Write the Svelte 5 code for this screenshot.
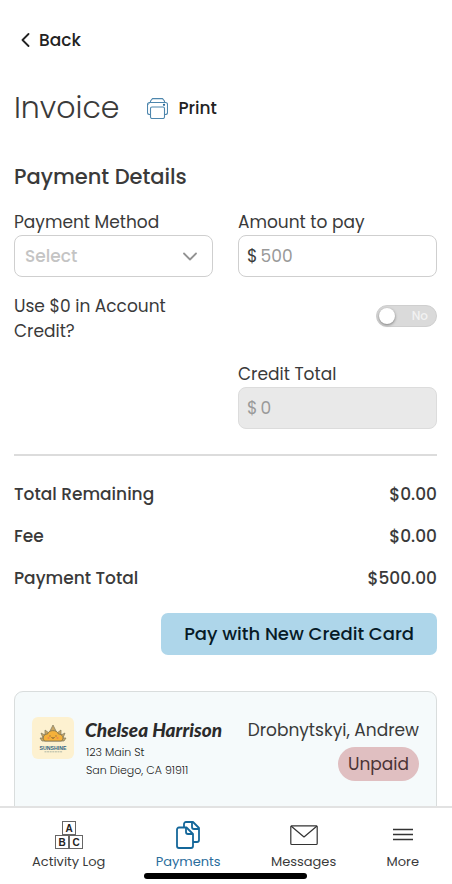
<script>
  let method = $state('');
  let amount = $state('');
  let useCredit = $state(false);

  const totals = [
    { label: 'Total Remaining', value: '$0.00' },
    { label: 'Fee', value: '$0.00' },
    { label: 'Payment Total', value: '$500.00' }
  ];
</script>

<div class="app">
  <main>
    <a class="back" href="#back">
      <svg width="9" height="14" viewBox="0 0 9 14" aria-hidden="true"><path d="M7.500 1 1.500 7 7.500 13" fill="none" stroke="currentColor" stroke-width="1.8" stroke-linecap="round" stroke-linejoin="round" /></svg>
      <span>Back</span>
    </a>

    <header>
      <h1>Invoice</h1>
      <button class="print" type="button">
        <svg width="21" height="21" viewBox="0 0 21 21" fill="none" stroke="#4d86ad" stroke-width="1.1" stroke-linejoin="round" aria-hidden="true">
          <path d="M3.500 4.500V3l2-2.400h10l2 2.400v1.500" />
          <path d="M4 16.500H2.500a2 2 0 0 1-2-2V6.500a2 2 0 0 1 2-2h16a2 2 0 0 1 2 2v8a2 2 0 0 1-2 2H17" />
          <path d="M.5 7.500 3 4.500" stroke-width=".6" />
          <path d="M3.500 19V10.500a1.500 1.500 0 0 1 1.500-1.500h11a1.500 1.500 0 0 1 1.500 1.500V19a1.500 1.500 0 0 1-1.500 1.500H5A1.500 1.500 0 0 1 3.500 19z" fill="#fff" />
          <circle cx="17" cy="6.800" r="1.100" fill="#1d6496" stroke="none" />
        </svg>
        <span>Print</span>
      </button>
    </header>

    <h2>Payment Details</h2>

    <form>
      <div class="field">
        <label for="method">Payment Method</label>
        <div class="box">
          <select id="method" bind:value={method}>
            <option value="">Select</option>
            <option value="card">Credit Card</option>
          </select>
          <svg class="chevron" width="14" height="9" viewBox="0 0 14 9" aria-hidden="true"><path d="m1 1.500 6 6L13 1.500" fill="none" stroke="#929292" stroke-width="1.8" stroke-linecap="round" stroke-linejoin="round" /></svg>
        </div>
      </div>
      <div class="field">
        <label for="amount">Amount to pay</label>
        <div class="box money">
          <span>$</span>
          <input id="amount" type="text" placeholder="500" bind:value={amount} />
        </div>
      </div>

      <label class="question" for="credit">Use $0 in Account Credit?</label>
      <div class="switch">
        <input id="credit" type="checkbox" bind:checked={useCredit} />
        <span>{useCredit ? 'Yes' : 'No'}</span>
      </div>

      <div class="field last">
        <label for="total">Credit Total</label>
        <div class="box money disabled">
          <span>$</span>
          <input id="total" type="text" value="0" disabled />
        </div>
      </div>
    </form>

    <hr />

    <dl>
      {#each totals as row}
        <div><dt>{row.label}</dt><dd>{row.value}</dd></div>
      {/each}
    </dl>

    <button class="pay" type="button">Pay with New Credit Card</button>

    <section class="card">
      <svg class="logo" width="42" height="42" viewBox="0 0 42 42" aria-hidden="true">
        <rect width="42" height="42" rx="6" fill="#fdf1d0" />
        <path d="m10 24-2-3 3 0-2-5 4 2 0-5 4 3 2-4 2-4 2 4 2 4 4-3v5l4-2-2 5 3 0-2 3z" fill="#c9a765" stroke="#7d7960" stroke-width=".7" />
        <path d="M12.500 24c-3-4 0-7 3-7 1-4 9-5 11 0 4 0 6 4 3 7z" fill="#f5b13b" stroke="#7b704e" stroke-width=".8" />
        <path d="M18 18.500v1M24 18.500v1M19.500 20.500q1.500 1.500 3 0" fill="none" stroke="#614b32" stroke-width=".9" />
        <circle cx="16.500" cy="21" r="1" fill="#ee8a4a" /><circle cx="25.500" cy="21" r="1" fill="#ee8a4a" />
        <text x="21" y="32.500" text-anchor="middle" font-family="Liberation Sans, sans-serif" font-size="5.200" font-weight="700" fill="#2f6480">SUNSHINE</text>
        <path d="M12.500 34.800h18" stroke="#9aa79a" stroke-width=".8" stroke-dasharray="2 .6" />
      </svg>
      <div class="business">
        <strong>Chelsea Harrison</strong>
        <address>123 Main St<br />San Diego, CA 91911</address>
      </div>
      <div class="client">
        <span>Drobnytskyi, Andrew</span>
        <span class="status">Unpaid</span>
      </div>
    </section>
  </main>

  <nav>
    <a href="#activity">
      <svg width="28" height="28" viewBox="0 0 28 28" fill="#fff" stroke="#666" aria-hidden="true">
        <rect x="7.500" y=".5" width="13" height="13" /><rect x=".5" y="14.500" width="13" height="13" /><rect x="14.500" y="14.500" width="13" height="13" />
        <g stroke="none" fill="#222" font-family="Liberation Sans, sans-serif" font-size="10" font-weight="700" text-anchor="middle"><text x="14" y="11">A</text><text x="7" y="25">B</text><text x="21" y="25">C</text></g>
      </svg>
      <span>Activity Log</span>
    </a>
    <a class="active" href="#payments" aria-current="page">
      <svg width="24" height="28" viewBox="0 0 24 28" fill="none" stroke="#14679a" stroke-width="1.800" stroke-linejoin="round" aria-hidden="true">
        <path d="M8 6V3a2 2 0 0 1 2-2h7l6 6v12a2 2 0 0 1-2 2h-4" />
        <path d="M16 1v5a2 2 0 0 0 2 2h5" />
        <path d="M10.500 6.500H3a2 2 0 0 0-2 2V25a2 2 0 0 0 2 2h12a2 2 0 0 0 2-2V13z" fill="#fff" />
        <path d="M10 6.500V11a2 2 0 0 0 2 2h5" />
      </svg>
      <span>Payments</span>
    </a>
    <a href="#messages">
      <svg width="28" height="28" viewBox="0 0 28 28" fill="none" stroke="#333" stroke-width="1.2" stroke-linejoin="round" aria-hidden="true"><rect x=".8" y="4.800" width="26.400" height="18.700" rx="1" /><path d="m1 5 13 11L27 5" /></svg>
      <span>Messages</span>
    </a>
    <a href="#more">
      <svg width="22" height="28" viewBox="0 0 22 28" stroke="#333" stroke-width="1.400" aria-hidden="true"><path d="M1 8.500h20M1 13.500h20M1 18.500h20" /></svg>
      <span>More</span>
    </a>
    <div class="indicator"></div>
  </nav>
</div>

<style>
  :global(body) { margin: 0; background: #fff; }
  * { box-sizing: border-box; }
  .app {
    display: flex;
    flex-direction: column;
    height: 100vh;
    font-family: Poppins, Inter, 'Open Sans', sans-serif;
    font-size: 17px;
    line-height: 26px;
    color: #3a3a3a;
  }
  main { flex: 1; min-height: 0; overflow: hidden; padding: 27px 15px 0 14px; display: flex; flex-direction: column; }
  main > * { flex-shrink: 0; }
  a { color: inherit; text-decoration: none; }
  button, input, select { font: inherit; color: inherit; }
  button { border: 0; background: none; padding: 0; }
  .back { display: flex; align-items: center; gap: 9px; padding-left: 7px; font-weight: 500; color: #222; align-self: flex-start; }
  header { display: flex; align-items: center; gap: 28px; margin-top: 35px; }
  h1 { margin: 0; font-size: 30px; line-height: 40px; font-weight: 300; }
  .print { display: flex; align-items: center; gap: 10px; font-weight: 500; color: #222; }
  h2 { margin: 32px 0 15px; font-size: 21px; line-height: 34px; font-weight: 500; }
  form { display: grid; grid-template-columns: 1fr 1fr; column-gap: 25px; row-gap: 17px; }
  .field { display: flex; flex-direction: column; min-width: 0; }
  .last { grid-column: 2; }
  .box { position: relative; display: flex; align-items: center; height: 42px; border: 1px solid #cfcfcf; border-radius: 8px; background: #fff; }
  select { appearance: none; width: 100%; height: 100%; padding: 0 40px 0 10px; border: 0; border-radius: 8px; background: none; color: #c4c4c4; font-weight: 500; }
  .chevron { position: absolute; right: 15px; pointer-events: none; }
  .money { padding: 0 8px; gap: 3px; }
  .money input { flex: 1; min-width: 0; border: 0; padding: 0; background: none; outline: 0; color: #999; }
  .money input::placeholder { color: #999; opacity: 1; }
  .disabled { background: #e9e9e9; border-color: #dcdcdc; color: #999; }
  .question { line-height: 25px; }
  .switch { position: relative; justify-self: end; align-self: start; margin-top: 11px; width: 61px; height: 22px; }
  .switch input { appearance: none; display: block; margin: 0; width: 100%; height: 100%; border: 1px solid #cfcfcf; border-radius: 11px; background: #dadada; }
  .switch input::before { content: ''; display: block; width: 16px; height: 16px; margin: 2px; border-radius: 50%; background: #fff; box-shadow: 0 1px 3px #777; }
  .switch input:checked::before { margin-left: 41px; }
  .switch span { position: absolute; right: 9px; top: 0; font-size: 12px; line-height: 22px; font-weight: 500; color: #f2f2f2; pointer-events: none; }
  .switch input:checked + span { right: auto; left: 9px; }
  hr { width: 100%; margin: 25px 0 17px; border: 0; border-top: 2px solid #dcdcdc; }
  dl { margin: 0; font-weight: 500; }
  dl div { display: flex; justify-content: space-between; line-height: 42px; }
  dd { margin: 0; }
  .pay { align-self: flex-end; margin-top: 14px; height: 42px; padding: 0 23px; border-radius: 7px; background: #aed6ea; color: #071b27; font-size: 18px; font-weight: 500; }
  .card { display: flex; align-items: flex-start; margin-top: 36px; padding: 25px 17px 60px; border: 1px solid #d9dddd; border-radius: 9px; background: #f5fafb; }
  .logo { flex: none; }
  .business { margin: 0 auto 0 11px; white-space: nowrap; }
  .business strong { display: block; font: italic 900 19px/26px Lato, sans-serif; color: #2b2b2b; }
  address { padding-left: 1px; font-size: 11px; line-height: 18px; font-style: normal; font-weight: 300; color: #222; }
  .client { display: flex; flex-direction: column; align-items: flex-end; gap: 4px; white-space: nowrap; }
  .status { padding: 4px 10px; border-radius: 17px; background: #e0bfc1; color: #4a3335; }
  nav { position: relative; flex: none; display: flex; justify-content: space-between; height: 78px; padding: 13px 33px 0 32px; border-top: 2px solid #e2e2e2; background: #fff; font-size: 13px; line-height: 26px; }
  nav a { display: flex; flex-direction: column; align-items: center; }
  .active { color: #2a6d9c; }
  .indicator { position: absolute; left: 50%; bottom: 5px; width: 163px; height: 6px; margin-left: -82px; border-radius: 3px; background: #000; }
</style>
